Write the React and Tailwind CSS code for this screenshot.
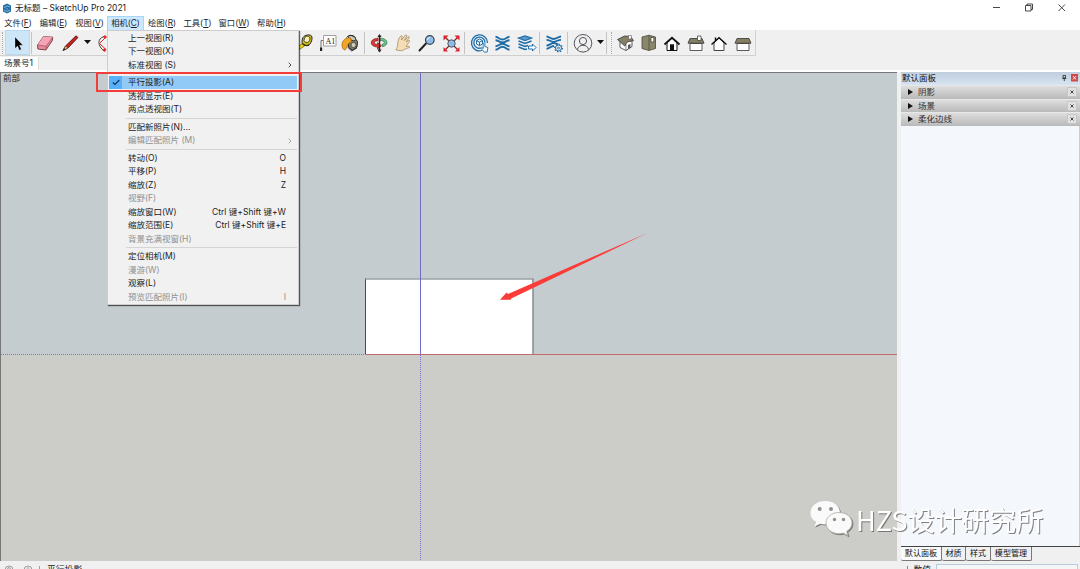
import React from 'react';

const menuBar = [
  { label: '文件', key: 'F', width: 'w-[34px]' },
  { label: '编辑', key: 'E', width: 'w-[37px]' },
  { label: '视图', key: 'V', width: 'w-[35px]' },
  { label: '相机', key: 'C', width: 'w-[37px]', open: true },
  { label: '绘图', key: 'R', width: 'w-[36px]' },
  { label: '工具', key: 'T', width: 'w-[35px]' },
  { label: '窗口', key: 'W', width: 'w-[38px]' },
  { label: '帮助', key: 'H', width: 'w-[37px]' }
];

const cameraMenu = [
  [
    { label: '上一视图(R)' },
    { label: '下一视图(X)' },
    { label: '标准视图 (S)', submenu: true }
  ],
  [
    { label: '平行投影(A)', checked: true },
    { label: '透视显示(E)' },
    { label: '两点透视图(T)' }
  ],
  [
    { label: '匹配新照片(N)...' },
    { label: '编辑匹配照片 (M)', submenu: true, disabled: true }
  ],
  [
    { label: '转动(O)', shortcut: 'O' },
    { label: '平移(P)', shortcut: 'H' },
    { label: '缩放(Z)', shortcut: 'Z' },
    { label: '视野(F)', disabled: true },
    { label: '缩放窗口(W)', shortcut: 'Ctrl 键+Shift 键+W' },
    { label: '缩放范围(E)', shortcut: 'Ctrl 键+Shift 键+E' },
    { label: '背景充满视窗(H)', disabled: true }
  ],
  [
    { label: '定位相机(M)' },
    { label: '漫游(W)', disabled: true },
    { label: '观察(L)' },
    { label: '预览匹配照片(I)', shortcut: 'I', disabled: true }
  ]
];

function Icon({ children }) {
  return (
    <svg width="24" height="24" viewBox="0 0 24 24" fill="none" className="shrink-0 overflow-visible">
      {children}
    </svg>
  );
}

function Tool({ width, active, children }) {
  return (
    <div className={`${width} h-[25px] shrink-0 flex items-center justify-center ${active ? 'bg-[#cce6f8] border border-[#b5daf3]' : ''}`}>
      {children}
    </div>
  );
}

function Separator({ width }) {
  return (
    <div className={`${width} shrink-0 flex justify-center`}>
      <div className="w-px h-[22px] bg-[#c4c4c4]" />
    </div>
  );
}

function Grip() {
  return <div className="w-[5px] h-[22px] shrink-0 px-[2px]"><div className="h-full border-l border-dotted border-[#aaa]" /></div>;
}

function DropArrow() {
  return (
    <svg width="7" height="4" viewBox="0 0 7 4" className="shrink-0 overflow-visible mb-[2px]">
      <path d="M0 0h7L3.5 4z" fill="#111" />
    </svg>
  );
}

function SelectIcon() {
  return (
    <Icon>
      <path d="M9 6v11.500l2.600-2.400 1.800 4.100 1.900-.9-1.800-4h3.400z" fill="#000" stroke="#fff" strokeWidth=".3" />
    </Icon>
  );
}

function EraserIcon() {
  return (
    <Icon>
      <path d="m4.500 14 6-8.500 9.200.7-.3 3.300-6.500 9.500-8-1z" fill="#e5899b" stroke="#713742" strokeWidth=".9" />
      <path d="m4.500 14 6-8.500 9.200.7-6.500 9z" fill="#f5a5b5" />
      <path d="m4.500 14 8.700 1.200 6.500-9M13.200 15.200l-.3 3.800" stroke="#a54e60" strokeWidth=".7" />
    </Icon>
  );
}

function PencilIcon() {
  return (
    <Icon>
      <path d="m5 19.500 2.500-4.500L18 4.800l2 1.700L10 17z" fill="#cc1f1f" stroke="#421010" strokeWidth=".8" />
      <path d="m5 19.500 2.500-4.500 2.500 2z" fill="#ecc58f" stroke="#4c2d16" strokeWidth=".6" />
      <path d="m5 19.500 1.200-2.300 1.400 1.100z" fill="#111" />
    </Icon>
  );
}

function ArcIcon() {
  return (
    <Icon>
      <path d="M12 5.500C5 7.500 5.500 15 12 20" stroke="#333" strokeWidth=".9" />
      <path d="m14 6-6.500 6.500 6.500 6" stroke="#e3272d" />
      <path d="m13 4 2 2-2 2-2-2zM12.500 17l2 2-2 2-2-2z" fill="#e3272d" />
    </Icon>
  );
}

function TapeIcon() {
  return (
    <Icon>
      <path d="m8 12.500-5 4.500v3l7.500-5" fill="#efd819" stroke="#6f6509" strokeWidth=".8" />
      <path d="M9 6.500c1.500-2.500 7-3.500 8.500-1.500 1.500 2.500-.5 7.500-2.500 9-2 1.200-5.500.3-6.500-1.200-.8-1.500-.5-4.300.5-6.300z" fill="#cdbb19" stroke="#222" />
      <ellipse cx="13" cy="8.300" rx="2.800" ry="3.400" fill="#f6f1ae" stroke="#333" strokeWidth=".8" transform="rotate(28 13 8.300)" />
      <path d="M8.500 12.800c2 1.800 4.500 2.200 6.500 1" stroke="#332f08" strokeWidth="1.300" />
    </Icon>
  );
}

function TextIcon() {
  return (
    <Icon>
      <path d="M6.500 4.500h13.500v10H8.500v-5h-2z" fill="#fff" />
      <path d="M7.500 4.500H20v10.500H7.500z" fill="#fff" stroke="#888" strokeWidth=".8" />
      <path d="M7 9.500H5V17" stroke="#777" />
      <path d="M4 16.500h2.200v3.500H4z" fill="#222" />
      <text x="9.500" y="12.500" fontSize="8" fontFamily="Liberation Serif, serif" fill="#222">A1</text>
    </Icon>
  );
}

function BucketIcon() {
  return (
    <Icon>
      <path d="m11 6 4-1.200 4.500 5.700-.5 5.500-4.500 3.500-4-3.500z" fill="#817966" stroke="#282822" />
      <ellipse cx="14" cy="7" rx="4" ry="2.300" fill="#c9c5b6" stroke="#333" strokeWidth=".8" transform="rotate(25 14 7)" />
      <path d="M12.500 7C8 6 4 9.500 4 14c0 2 .5 3.500 2 4.800 1 .5 1.500 0 2-1 .8-3 2-5.500 5.500-7.300z" fill="#f2a623" stroke="#a16212" strokeWidth=".7" />
      <path d="M8.500 6.500C10.500 4 15 3.500 17.500 6.800M9.500 16l4 3.800 5.500-3" stroke="#222" />
      <circle cx="15.500" cy="14" r="2.500" fill="#d4cebd" stroke="#444" strokeWidth=".8" />
    </Icon>
  );
}

function OrbitIcon() {
  return (
    <Icon>
      <path d="M13 7.200c4 0 7 1.800 7 4.300 0 2-2 3.700-4.500 4.200l-.5-2.300c1.500-.3 2.300-1 2.300-1.900 0-1.300-2-2-4.300-2z" fill="#6cc490" stroke="#2d6c48" strokeWidth=".7" />
      <path d="M11 7.200C7 7.500 4.300 9 4.300 11.800c0 2.500 2.700 4 6.200 4.200V18l4-3.300-4-3v1.800c-2-.1-3.200-.8-3.200-1.900 0-1.100 1.700-1.800 3.700-1.800z" fill="#de3939" stroke="#7b1919" strokeWidth=".7" />
      <path d="M12.500 4v16.500" stroke="#5d1010" strokeWidth="1.500" />
      <path d="m10.500 6 2-3 2 3zM10.500 18.500l2 3 2-3z" fill="#262020" />
    </Icon>
  );
}

function HandIcon() {
  return (
    <Icon>
      <path d="M4.800 18.800c1.500-2 2-4 2-6.800.2-3 1.500-5.500 3-7 .8-.7 1.700 0 1.300 1L10.500 9l3.800-4.800c.8-.8 1.900-.1 1.400.9l-2.400 4.400 3.800-3.800c.8-.6 1.600.2 1 1l-3 4.300 2.400-1.500c.9-.4 1.500.4.9 1.100-1.700 1.900-2 3.400-3.500 4.700h3c1 .2.9 1.200 0 1.400-3.400.6-5 2.800-8.400 3.100z" fill="#f5deb5" stroke="#a48a64" strokeWidth=".8" />
    </Icon>
  );
}

function ZoomIcon() {
  return (
    <Icon>
      <path d="m11 12.500-6.500 7" stroke="#222" strokeWidth="2" strokeLinecap="round" />
      <circle cx="14.800" cy="9" r="4.300" fill="#8fbce6" stroke="#3d4650" strokeWidth="1.200" />
      <path d="M12.500 9c0-1.500 1-2.500 2.500-2.500" stroke="#e7f4ff" />
    </Icon>
  );
}

function ZoomExtentsIcon() {
  return (
    <Icon>
      <path d="M6 6l13 13M19 6 6 19" stroke="#8b2226" strokeWidth="1.300" />
      <circle cx="12.500" cy="12.500" r="3.700" fill="#8fbce6" stroke="#4b5965" />
      <path d="M4.500 4.500h5l-5 5zM20.500 4.500h-5l5 5zM4.500 20.500h4.500L4.500 16zM20.500 20.500H16l4.500-4.500z" fill="#e3202a" />
    </Icon>
  );
}

function WarehouseIcon() {
  return (
    <Icon>
      <g stroke="#1f6faa" strokeWidth="1.300">
        <path d="M15 19.500A8 8 0 1 1 20.500 12" />
        <path d="M14 17A5.600 5.600 0 1 1 18 11.500" />
        <path d="m12.500 8 3 1.600V13l-3 1.700-3-1.700V9.600zM9.500 9.600l3 1.500 3-1.500m-3 1.500v3.600" strokeWidth="1" />
        <path d="M16.200 12.500v5l-1.500-1c-.8 0-.7.800 0 1.600l2.500 3h3l.7-4.600-3-1v-3c0-1-1.700-1-1.700 0z" fill="#f5fbff" strokeWidth=".9" />
      </g>
    </Icon>
  );
}

function ExtensionIcon() {
  return (
    <Icon>
      <g stroke="#1d6ba5" strokeWidth="1.900">
        <path d="M4.500 5.800c3 .2 4 2.700 7 2.700s4-2.500 7-2.700" />
        <path d="M4.500 9.300c3 0 4 2.200 7 2.200s4-2.200 7-2.200" />
        <path d="M4.500 15.200c3 0 4-2.400 7-2.400s4 2.400 7 2.400" />
        <path d="M4.500 18.800c3-.2 4-3 7-3s4 2.800 7 3" />
      </g>
    </Icon>
  );
}

function LayoutIcon() {
  return (
    <Icon>
      <g stroke="#1f6da6" strokeWidth="1.200">
        <path d="m4.500 7 6.500-2 6.500 2L11 9.500z" fill="#5d9ccb" />
        <path d="m4.500 10 6.500 2.500 6.500-2.500m-13 3 6.500 2.500 3-1M4.500 16l6.500 2.500 2-.6" strokeWidth="1.600" />
        <path d="M14.500 15h4v-2l3.500 3.500-3.500 3.500v-2h-4z" fill="#fff" strokeWidth="1" />
      </g>
    </Icon>
  );
}

function ExtensionManagerIcon() {
  return (
    <Icon>
      <g stroke="#1d6ba5" strokeWidth="1.800">
        <path d="M4.500 5.500c3 .2 4 2.500 7 2.500s4.500-2.300 7.500-2.500M4.500 8.800c3 0 4 2 7 2s4.500-2 7.500-2M4.500 14.500c3 0 4-2.300 7-2.300s3 .5 4.500 1M4.500 17.800c3-.2 4-2.700 7.500-2.800" />
        <circle cx="16.500" cy="17" r="3" fill="#f0f0f0" strokeWidth="1" />
        <circle cx="16.500" cy="17" r="3.900" strokeWidth="1.100" strokeDasharray="1.500 1.500" />
        <circle cx="16.500" cy="17" r="1" strokeWidth=".8" />
      </g>
    </Icon>
  );
}

function UserIcon() {
  return (
    <Icon>
      <g stroke="#55555c" strokeWidth="1">
        <circle cx="12" cy="12.300" r="8.800" />
        <circle cx="12" cy="10" r="3.600" />
        <path d="M6.500 18.800c.3-6 10.700-6 11 0" />
      </g>
    </Icon>
  );
}

function IsoHouseIcon() {
  return (
    <Icon>
      <path d="m6 11 5-3.500 7 2.500v5.500L12 19.500l-6-3z" fill="#fff" stroke="#333" strokeWidth=".8" />
      <path d="M3.500 8.500 10.500 5l6 .5 3 4-6.500 1.500-2.200 4z" fill="#858064" stroke="#333" strokeWidth=".8" />
      <path d="M14.500 4.500h2.800V8h-2.800z" fill="#fff" stroke="#555" strokeWidth=".6" />
      <path d="M12 13.500v6" stroke="#555" strokeWidth=".7" />
      <path d="m14 14 2.500-1v4L14 18z" fill="#555" />
    </Icon>
  );
}

function TopViewIcon() {
  return (
    <Icon>
      <path d="m5 6 7-1.800L18.500 6v11.500l-6.500 2-7-2z" fill="#8b876c" stroke="#4a483a" strokeWidth=".8" />
      <path d="M12 4.200v15.300" stroke="#5b5845" />
      <path d="M14 6.500h2.800V11H14z" fill="#fff" stroke="#333" strokeWidth=".7" />
    </Icon>
  );
}

function FrontViewIcon() {
  return (
    <Icon>
      <path d="M7 12v7.500h10V12l-5-5z" fill="#fff" stroke="#111" strokeWidth="1" />
      <path d="m4.500 13.500 7.500-6.700 7.500 6.700" stroke="#111" strokeWidth="1.800" />
      <path d="M10 13.300h4v6.200h-4z" fill="#111" />
    </Icon>
  );
}

function SideViewIcon({ chimney }) {
  return (
    <Icon>
      <path d="M6 12.500h12v7H6z" fill="#fff" stroke="#333" strokeWidth=".8" />
      <path d="M6 7.500h12l2 4.700H4z" fill="#858064" stroke="#333" strokeWidth=".8" />
      {chimney && <path d="M13.500 5H17v4.500h-3.500z" fill="#fff" stroke="#444" strokeWidth=".8" />}
    </Icon>
  );
}

function BackViewIcon() {
  return (
    <Icon>
      <path d="M7 12v7.500h10V12l-5-5z" fill="#fff" stroke="#444" strokeWidth="1" />
      <path d="M4.500 13.500 12 6.800l7.500 6.700M8.500 9.500V6.500" stroke="#111" strokeWidth="1.400" />
    </Icon>
  );
}

function TitleBar() {
  return (
    <div className="h-[16px] shrink-0 flex items-center bg-white pl-[2px]">
      <svg width="10" height="11" viewBox="0 0 10 11" className="shrink-0">
        <path d="M1 2.500 5 .5l4 2v6l-4 2-4-2z" fill="#236fa3" />
        <path d="M2 4.500 5.500 3 8 4M2 7l3 1.500L8 7M5 5v1.500" stroke="#9ccae8" strokeWidth=".8" fill="none" />
      </svg>
      <span className="ml-[3px] pt-px w-[112px] text-[8.500px] leading-[15px] text-[#222] whitespace-nowrap">无标题 – SketchUp Pro 2021</span>
      <div className="ml-auto w-[96px] h-[16px] mr-[2px]">
        <svg width="96" height="16" viewBox="0 0 96 16" fill="none" stroke="#333" strokeWidth=".9">
          <path d="M11 7.500h7" />
          <path d="M43.500 5.500H49V11h-5.500zM45 5.500V4h5.500v5.500H49" />
          <path d="m76.500 4.500 6.500 6.500m0-6.500L76.500 11" />
        </svg>
      </div>
    </div>
  );
}

function MenuBar() {
  return (
    <div className="h-[14px] shrink-0 flex bg-white pl-px text-[8.300px] leading-[14px] text-[#222]">
      {menuBar.map((item) => (
        <div
          key={item.key}
          className={`${item.width} h-[14px] shrink-0 text-center whitespace-nowrap ${item.open ? 'bg-[#cce8ff] border border-b-0 border-[#a5d5f8] leading-[12px]' : ''}`}
        >
          {item.label}(<span className="underline underline-offset-1">{item.key}</span>)
        </div>
      ))}
    </div>
  );
}

function Toolbar() {
  return (
    <div className="h-[27px] shrink-0 bg-[#f0f0f0]">
      <div className="w-[756px] h-[26px] flex items-center border-r border-b border-[#d0d0d0]">
        <Grip />
        <Tool width="w-[25px]" active><SelectIcon /></Tool>
        <Separator width="w-[3px]" />
        <Tool width="w-[24px]"><EraserIcon /></Tool>
        <Tool width="w-[26px]"><PencilIcon /></Tool>
        <Tool width="w-[8px]"><DropArrow /></Tool>
        <Tool width="w-[26px]"><ArcIcon /></Tool>
        <div className="w-[177px] shrink-0" />
        <Tool width="w-[24px]"><TapeIcon /></Tool>
        <Tool width="w-[20px]"><TextIcon /></Tool>
        <Tool width="w-[24px]"><BucketIcon /></Tool>
        <Separator width="w-[5px]" />
        <Tool width="w-[24px]"><OrbitIcon /></Tool>
        <Tool width="w-[24px]"><HandIcon /></Tool>
        <Tool width="w-[24px]"><ZoomIcon /></Tool>
        <Tool width="w-[23px]"><ZoomExtentsIcon /></Tool>
        <Separator width="w-[4px]" />
        <Tool width="w-[25px]"><WarehouseIcon /></Tool>
        <Tool width="w-[23px]"><ExtensionIcon /></Tool>
        <Tool width="w-[24px]"><LayoutIcon /></Tool>
        <Separator width="w-[3px]" />
        <Tool width="w-[25px]"><ExtensionManagerIcon /></Tool>
        <Separator width="w-[3px]" />
        <Tool width="w-[28px]"><UserIcon /></Tool>
        <Tool width="w-[6px]"><DropArrow /></Tool>
        <Separator width="w-[6px]" />
        <Grip />
        <Tool width="w-[23px]"><IsoHouseIcon /></Tool>
        <Tool width="w-[23px]"><TopViewIcon /></Tool>
        <Tool width="w-[24px]"><FrontViewIcon /></Tool>
        <Tool width="w-[23px]"><SideViewIcon chimney /></Tool>
        <Tool width="w-[24px]"><BackViewIcon /></Tool>
        <Tool width="w-[24px]"><SideViewIcon /></Tool>
      </div>
    </div>
  );
}

function CameraMenu() {
  return (
    <div className="absolute left-[107px] top-[30px] w-[192px] h-[275px] bg-[#f1f1f1] border border-[#ccc] shadow-[1px_1px_1px_rgba(0,0,0,0.6)] text-[8.500px] text-[#222]">
      {cameraMenu.map((group, i) => (
        <div key={i}>
          {i > 0 && (
            <div className="h-[4px] pt-[1.500px] pl-[18px] pr-px"><div className="h-px bg-[#d4d4d4]" /></div>
          )}
          {group.map((item) => (
            <div
              key={item.label}
              className={`h-[13.500px] mx-px flex items-center leading-[13px] whitespace-nowrap ${item.checked ? 'bg-[#91c9f7]' : ''} ${item.disabled ? 'text-[#909090]' : ''}`}
            >
              <div className={`w-[13px] h-full shrink-0 mr-[6px] flex items-center justify-center ${item.checked ? 'bg-[#56b0fa]' : ''}`}>
                {item.checked && (
                  <svg width="8" height="7" viewBox="0 0 8 7" fill="none">
                    <path d="m.8 3.500 2.200 2L7.300 1" stroke="#13314d" strokeWidth="1.100" />
                  </svg>
                )}
              </div>
              <span className="pt-px">{item.label}</span>
              {item.shortcut && <span className="ml-auto mr-[11px] pt-px">{item.shortcut}</span>}
              {item.submenu && (
                <svg width="4" height="6" viewBox="0 0 4 6" fill="none" className="ml-auto mr-[5px] mt-px">
                  <path d="m.7.700 2.300 2.300L.7 5.300" stroke="currentColor" strokeWidth=".8" />
                </svg>
              )}
            </div>
          ))}
        </div>
      ))}
    </div>
  );
}

function Viewport() {
  return (
    <div className="w-[897px] shrink-0 h-full flex flex-col bg-[#c5ccd0] border-t border-l border-[#777]">
      <div className="h-0 text-[8.500px] leading-[10px] pl-[2px] text-[#222]">前部</div>
      <svg width="896" height="488" viewBox="1 73 896 488" fill="none" className="block shrink-0">
        <path d="M1 355h896v206H1z" fill="#cccdc8" />
        <path d="M365.500 279.500h167v75h-167z" fill="#fff" />
        <path d="M365.500 354.500v-76" stroke="#4a4d50" />
        <path d="M365 279h168.500" stroke="#85898b" strokeWidth="1.200" />
        <path d="M533 279v76" stroke="#85898b" strokeWidth="1.400" />
        <path d="M420.500 73v282" stroke="#6c6cc4" />
        <path d="M420.500 355v206" stroke="#7878d4" strokeDasharray="1 1" />
        <path d="M365 354.500h532" stroke="#c06a6b" />
        <path d="M1 354.500h364" stroke="#d85c62" strokeDasharray="1 1" />
        <path d="m500 299.800 6.600-7.300 1.300 1.500L648 232.700 511.200 298.600l-.4 1.200z" fill="#fb3c38" />
      </svg>
    </div>
  );
}

function SidePanel() {
  return (
    <div className="flex-1 h-full flex flex-col bg-[#f0f0f0] pl-[4px] text-[8.500px] text-[#111]">
      <div className="h-[13px] shrink-0 flex items-center pl-px pr-[2px] bg-linear-to-b from-[#bfcddd] to-[#d8e4f1]">
        <span className="leading-[11px] pb-px">默认面板</span>
        <svg width="16" height="8" viewBox="0 0 16 8" fill="none" className="ml-auto mb-px">
          <path d="M1 1.500h2.500V4H1zM.3 4.500h4M2.300 4.500V7" stroke="#222" strokeWidth=".8" />
          <path d="M9 0h7v7.500H9z" fill="#d24848" />
          <path d="m11 2 3 3.500m0-3.500-3 3.500" stroke="#fff" strokeWidth=".9" />
        </svg>
      </div>
      {['阴影', '场景', '柔化边线'].map((name) => (
        <div key={name} className="h-[13.500px] shrink-0 flex items-center pl-[7px] pr-[3px] bg-linear-to-b from-[#dedede] to-[#b9b9b9] border-t border-[#e8e8e8]">
          <svg width="5" height="6" viewBox="0 0 5 6"><path d="M0 0v6l5-3z" fill="#111" /></svg>
          <span className="ml-[5px] leading-[12px] text-[#333]">{name}</span>
          <svg width="10" height="10" viewBox="0 0 10 10" fill="none" className="ml-auto">
            <path d="M.5.5h9v9h-9z" fill="#e2e2e2" stroke="#c5c5c5" />
            <path d="m3.500 3.500 3 3m0-3-3 3" stroke="#333" strokeWidth=".9" />
          </svg>
        </div>
      ))}
      <div className="flex-1 bg-[#f4f7fc] border-r border-[#ccc]" />
      <div className="h-[15px] shrink-0 flex border-t border-[#444]">
        {[
          { name: '默认面板', width: 'w-[41px]', current: true },
          { name: '材质', width: 'w-[24px]' },
          { name: '样式', width: 'w-[25px]' },
          { name: '模型管理', width: 'w-[41px]' }
        ].map((tab) => (
          <div
            key={tab.name}
            className={`${tab.width} h-[14px] shrink-0 text-center leading-[13px] text-[8.100px] whitespace-nowrap border-r border-b border-[#777] rounded-b-[2px] ${tab.current ? 'bg-[#f8fafc]' : ''}`}
          >
            {tab.name}
          </div>
        ))}
      </div>
    </div>
  );
}

function StatusBar() {
  return (
    <div className="h-[8px] shrink-0 flex items-start overflow-hidden bg-[#f0f0f0] pl-[4px] text-[8.800px] leading-[12px] text-[#222]">
      <svg width="36" height="14" viewBox="0 0 36 14" fill="none" stroke="#888" strokeWidth=".8" className="shrink-0">
        <circle cx="5" cy="9" r="4" />
        <circle cx="5" cy="8" r="1.400" />
        <circle cx="24" cy="9" r="4" />
        <path d="M23 7.500c0-1 2-1 2 0M35.500 5v8" />
      </svg>
      <span className="ml-[7px] pt-[3px]">平行投影</span>
      <span className="ml-auto mr-[3px] w-px h-[10px] mt-[5px] bg-[#888]" />
      <span className="pt-[3px] ml-[2px]">数值</span>
      <div className="ml-[5px] mr-[2px] mt-[3px] w-[142px] h-[12px] bg-[#f4f6f8] border border-[#b4cbe0]" />
    </div>
  );
}

function Watermark() {
  return (
    <div className="absolute left-[809px] top-[498px] flex items-center drop-shadow-[1px_1px_0.500px_rgba(90,90,90,0.75)]">
      <svg width="45" height="40" viewBox="0 0 45 40" className="shrink-0">
        <path d="M16 3C7.500 3 1.500 8.500 1.500 15c0 4 2 7 5.500 9.300L5.500 28.500l5.700-2.700c1.500.4 3 .6 4.800.6 8.500 0 15-5 15-11.700S24.500 3 16 3z" fill="#fafafa" />
        <path d="M30 14.500c-7.500 0-13 4.500-13 10.500s5.500 10.700 13 10.700c1.500 0 3-.2 4.200-.6l4.800 2.600-1.300-4.200c3.300-2 5.300-5 5.300-8.500 0-6-5.500-10.500-13-10.500z" fill="#fafafa" stroke="#aaaaa6" strokeWidth=".8" />
        <g fill="#8f8f8b">
          <circle cx="10.700" cy="11" r="2" />
          <circle cx="22" cy="11" r="2" />
          <circle cx="25.500" cy="21.500" r="1.700" />
          <circle cx="34.500" cy="21.500" r="1.700" />
        </g>
      </svg>
      <span className="ml-[2px] pb-[0px] pt-[2px] text-[27.200px] leading-[36px] font-normal text-white whitespace-nowrap font-['Noto_Sans_CJK_SC',sans-serif]">HZS设计研究所</span>
    </div>
  );
}

function App() {
  return (
    <div className="relative w-[1080px] h-[569px] flex flex-col overflow-hidden bg-[#f0f0f0] font-['Inter','Noto_Sans_CJK_SC',sans-serif]">
      <TitleBar />
      <MenuBar />
      <Toolbar />
      <div className="h-[13px] shrink-0 flex">
        <div className="w-[39px] bg-white border-r border-[#ddd] pl-[4px] text-[8.500px] leading-[12px] text-[#222] whitespace-nowrap">场景号1</div>
      </div>
      <div className="h-[2px] shrink-0 bg-white" />
      <div className="h-[489px] shrink-0 flex">
        <Viewport />
        <SidePanel />
      </div>
      <StatusBar />
      <CameraMenu />
      <div className="absolute left-[96px] top-[72px] w-[206px] h-[20px] border-2 border-[#f23d3b]" />
      <Watermark />
    </div>
  );
}

export default App;
